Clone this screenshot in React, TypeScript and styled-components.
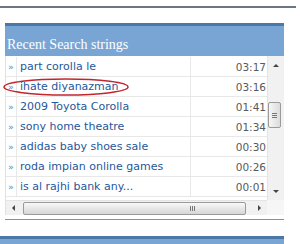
import React from 'react';
import styled, { createGlobalStyle } from 'styled-components';

const GlobalStyle = createGlobalStyle`
  html, body {
    margin: 0;
    padding: 0;
    background: #ffffff;
    overflow: hidden;
  }
`;

const Page = styled.div`
  width: 300px;
  height: 244px;
  padding-top: 6px;
  box-sizing: border-box;
  position: relative;
`;

const TopRule = styled.div`
  width: 296px;
  height: 2px;
  background: #6b7682;
`;

const Panel = styled.div`
  position: relative;
  margin: 15px 0 0 5px;
  width: 279px;
  border-bottom: 1px solid #8a8f96;
  padding-bottom: 4px;
`;

const Header = styled.div`
  height: 33px;
  border-top: 3px solid #4a78a9;
  background: #79a5d5;
  display: flex;
  align-items: flex-end;
  padding: 0 0 3px 2px;
  box-sizing: border-box;
  font-family: "Liberation Serif", "DejaVu Serif", serif;
  font-size: 14px;
  color: #ffffff;
`;

const Body = styled.div`
  display: flex;
  border-left: 1px solid #e2e2e2;
`;

const List = styled.div`
  width: 262px;
  padding-top: 1px;
`;

const Row = styled.div`
  display: grid;
  grid-template-columns: 11px 174px 1fr;
  height: 20px;
  border-bottom: 1px solid #e8e8e8;
  box-sizing: border-box;
  font-family: "DejaVu Sans", Verdana, sans-serif;
  font-size: 11px;
  align-items: center;
`;

const Bullet = styled.span`
  color: #5d8bc7;
  font-size: 9.5px;
  text-align: center;
  border-right: 1px solid #e8e8e8;
  height: 100%;
  display: flex;
  align-items: center;
  justify-content: center;
`;

const Term = styled.span`
  color: #26579a;
  padding-left: 3px;
  white-space: nowrap;
  overflow: hidden;
  border-right: 1px solid #e8e8e8;
  height: 100%;
  display: flex;
  align-items: center;
`;

const Time = styled.span`
  color: #555a60;
  text-align: right;
  padding-right: 1px;
  font-size: 10.5px;
`;

const VScroll = styled.div`
  width: 16px;
  height: 144px;
  background: #f1f1f1;
  border-left: 1px solid #e4e4e4;
  position: relative;
  display: flex;
  flex-direction: column;
  align-items: center;
`;

const Arrow = styled.div<{ $dir: 'up' | 'down' | 'left' | 'right' }>`
  width: 0;
  height: 0;
  ${({ $dir }) =>
    $dir === 'up'
      ? 'border-left: 3px solid transparent; border-right: 3px solid transparent; border-bottom: 3px solid #444;'
      : $dir === 'down'
      ? 'border-left: 3px solid transparent; border-right: 3px solid transparent; border-top: 3px solid #444;'
      : $dir === 'left'
      ? 'border-top: 3px solid transparent; border-bottom: 3px solid transparent; border-right: 3px solid #444;'
      : 'border-top: 3px solid transparent; border-bottom: 3px solid transparent; border-left: 3px solid #444;'}
`;

const ArrowCell = styled.div<{ $w?: number; $h?: number }>`
  width: ${({ $w }) => $w ?? 15}px;
  height: ${({ $h }) => $h ?? 15}px;
  display: flex;
  align-items: center;
  justify-content: center;
  flex-shrink: 0;
`;

const VThumb = styled.div`
  margin-top: 28px;
  width: 11px;
  height: 24px;
  margin-right: 3px;
  border: 1px solid #9a9a9a;
  border-radius: 2px;
  background: linear-gradient(to right, #f6f6f6, #dcdcdc);
  display: flex;
  flex-direction: column;
  align-items: center;
  justify-content: center;
  gap: 1px;
`;

const Grip = styled.div<{ $vertical?: boolean }>`
  background: #777;
  width: ${({ $vertical }) => ($vertical ? '1px' : '5px')};
  height: ${({ $vertical }) => ($vertical ? '5px' : '1px')};
`;

const Spacer = styled.div`
  flex: 1;
`;

const HScrollRow = styled.div`
  display: flex;
  height: 15px;
  border-left: 1px solid #e2e2e2;
`;

const HScroll = styled.div`
  width: 262px;
  display: flex;
  align-items: center;
  background: #f1f1f1;
  border-top: 1px solid #e4e4e4;
`;

const HThumb = styled.div`
  flex: 1;
  height: 11px;
  margin: 0 6px 0 2px;
  border: 1px solid #9a9a9a;
  border-radius: 2px;
  background: linear-gradient(to bottom, #f8f8f8, #d6d6d6);
  display: flex;
  align-items: center;
  justify-content: flex-end;
  padding-right: 50px;
  gap: 1px;
`;

const Corner = styled.div`
  width: 17px;
  background: #f6f6f6;
`;

const Ellipse = styled.svg`
  position: absolute;
  left: -4px;
  top: 53px;
  pointer-events: none;
`;

const NextBar = styled.div`
  position: absolute;
  left: 0;
  top: 236px;
  width: 284px;
  height: 8px;
  border-top: 3px solid #4a78a9;
  background: #79a5d5;
  box-sizing: border-box;
`;

const rows = [
  { term: 'part corolla le', time: '03:17' },
  { term: 'ihate diyanazman', time: '03:16' },
  { term: '2009 Toyota Corolla', time: '01:41' },
  { term: 'sony home theatre', time: '01:34' },
  { term: 'adidas baby shoes sale', time: '00:30' },
  { term: 'roda impian online games', time: '00:26' },
  { term: 'is al rajhi bank any...', time: '00:01' },
];

const App: React.FC = () => {
  return (
    <Page>
      <GlobalStyle />
      <TopRule />
      <Panel>
        <Header>Recent Search strings</Header>
        <Body>
          <List>
            {rows.map((r) => (
              <Row key={r.term}>
                <Bullet>»</Bullet>
                <Term>{r.term}</Term>
                <Time>{r.time}</Time>
              </Row>
            ))}
          </List>
          <VScroll>
            <ArrowCell $h={18}>
              <Arrow $dir="up" />
            </ArrowCell>
            <VThumb>
              <Grip />
              <Grip />
              <Grip />
            </VThumb>
            <Spacer />
            <ArrowCell $h={18}>
              <Arrow $dir="down" />
            </ArrowCell>
          </VScroll>
        </Body>
        <HScrollRow>
          <HScroll>
            <ArrowCell $w={15}>
              <Arrow $dir="left" />
            </ArrowCell>
            <HThumb>
              <Grip $vertical />
              <Grip $vertical />
              <Grip $vertical />
            </HThumb>
            <ArrowCell $w={15}>
              <Arrow $dir="right" />
            </ArrowCell>
          </HScroll>
          <Corner />
        </HScrollRow>
        <Ellipse width="130" height="22" viewBox="0 0 130 22">
          <ellipse cx="65" cy="11" rx="62" ry="8" fill="none" stroke="#c3252f" strokeWidth="1.5" />
        </Ellipse>
      </Panel>
      <NextBar />
    </Page>
  );
};

export default App;
